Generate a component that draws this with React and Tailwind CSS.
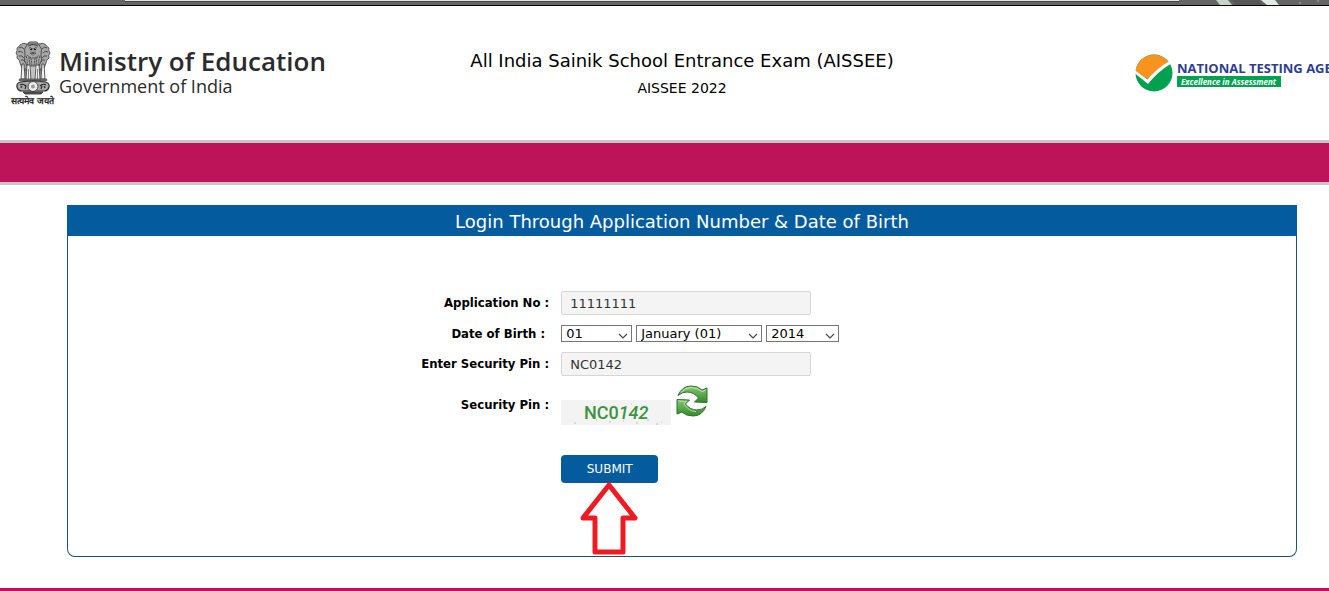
import React from "react";

const days = ["01", "02", "03", "04", "05", "06", "07", "08", "09", "10"];
const months = ["January (01)", "February (02)", "March (03)", "April (04)"];
const years = ["2014", "2013", "2012", "2011", "2010"];

const Emblem = () => (
	<svg viewBox="0 0 36 54" className="w-9 h-[54px]" aria-hidden="true">
		<g fill="#a8a8a8" stroke="#3a3a3a" strokeWidth="0.8">
			{/* side lions */}
			<path d="M12 3 Q8 1 5 4 Q4 6 2 7 Q3 9 1 12 Q3 14 2 17 Q5 19 5 22 Q6 26 9 29 L14 30 L14 5Z" />
			<path d="M24 3 Q28 1 31 4 Q32 6 34 7 Q33 9 35 12 Q33 14 34 17 Q31 19 31 22 Q30 26 27 29 L22 30 L22 5Z" />
			{/* front lion */}
			<path d="M12 4 Q13 0 18 1 Q23 0 24 4 Q28 8 26 13 Q28 20 24 25 L12 25 Q8 20 10 13 Q8 8 12 4Z" />
		</g>
		<g fill="none" stroke="#333" strokeWidth="0.8">
			<path d="M13 5 Q18 2 23 5 M13 3 H23 M14 7 Q16 6 17 8 M22 7 Q20 6 19 8 M18 7 V10 M15 11 Q18 9 21 11 M15 12 Q18 16 21 12" />
			<path d="M4 7 Q7 5 9 8 M3 11 Q6 9 8 12 M4 15 Q7 14 9 17 M6 19 Q9 18 10 21 M32 7 Q29 5 27 8 M33 11 Q30 9 28 12 M32 15 Q29 14 27 17 M30 19 Q27 18 26 21" />
			<path d="M11 15 Q13 20 12 24 M14 16 L15 24 M16 17 L17 25 M20 17 L19 25 M22 16 L21 24 M25 15 Q23 20 24 24 M12 14 Q18 20 24 14" strokeDasharray="2 0.8" />
		</g>
		<path d="M15 9 Q18 8 21 9 L20 13 Q18 15 16 13Z" fill="#999" />
		<path d="M15 8.500H17M19 8.500H21M16.500 12H19.500" stroke="#111" strokeWidth="1.200" />
		{/* legs */}
		<g stroke="#333" strokeWidth="0.8" fill="#f0f0f0">
			<path d="M7 23 L9 23 L10 38 L6 38Z M12 24 L15 24 L16 39 L11 39Z M21 24 L24 24 L25 39 L20 39Z M27 23 L29 23 L30 38 L26 38Z" />
		</g>
		<path d="M10.500 27V38M17 25V39M19 25V39M25.500 27V38M13.500 28V38M22.500 28V38" stroke="#666" strokeWidth="0.800" />
		{/* abacus */}
		<rect x="4" y="38" width="28" height="2" rx="1" fill="#777" stroke="#333" strokeWidth="0.6" />
		<path d="M6 41 Q18 39 30 41 Q35 42 34 46 Q33 50 29 50 H7 Q3 50 2 46 Q1 42 6 41Z" fill="#aaa" stroke="#2a2a2a" strokeWidth="1.200" />
		<circle cx="18" cy="45.500" r="5" fill="#eee" stroke="#444" strokeWidth="1" />
		<circle cx="18" cy="45.500" r="2" fill="#999" />
		<path d="M5 44 Q8 42 11 45 L10 48 M6 47 L7 45 M25 45 Q28 42 31 44 M26 48 L27 45 M30 47 L29 45" stroke="#222" fill="none" strokeWidth="1.100" />
		<path d="M8 51 H28 L26 53 H10Z" fill="#666" stroke="#222" strokeWidth="0.800" />
	</svg>
);

const NtaMark = () => (
	<svg viewBox="0 0 38 38" className="w-[38px] h-[38px] shrink-0" aria-hidden="true">
		<circle cx="19" cy="19" r="18.500" fill="#00a14f" />
		<path d="M0.500 18 A18.500 18.500 0 0 1 34 8.500 L13 25Z" fill="#f7931e" />
		<path d="M0 16.500 L12.500 25.500 Q22 14 34 7.500 L35.500 10 Q23 17.500 13 30 L0 19.500Z" fill="#fff" />
	</svg>
);

const RefreshIcon = () => (
	<svg viewBox="0 0 32 32" className="w-8 h-8" aria-hidden="true">
		<defs>
			<linearGradient id="leaf" x1="0" y1="0" x2="0" y2="1">
				<stop offset="0" stopColor="#8cc878" />
				<stop offset="1" stopColor="#2f8a2b" />
			</linearGradient>
		</defs>
		<g stroke="#2c7328" strokeWidth="1" strokeLinejoin="round" fill="url(#leaf)">
			<path d="M2 10.500 Q6 1 15 1 Q22 1 26 5 L31 3 V17.500 L18.500 17 L22.500 13 Q18 7 11 7 Q6 7 2 10.500Z" />
			<path d="M30 21.500 Q26 31 17 31 Q10 31 6 27 L1 29 V14.500 L13.500 15 L9.500 19 Q14 25 21 25 Q26 25 30 21.500Z" />
		</g>
		<path d="M5 7.500 Q9 2.500 15 2.500 Q21 2.500 26 6.500 L29.500 5" fill="none" stroke="#c5e6b9" strokeWidth="1" />
		<path d="M2.500 16 L10.500 16.500 L8 19 Q13 26.500 20 26.500" fill="none" stroke="#b5dba8" strokeWidth="1" />
	</svg>
);

const Row = ({ label, htmlFor, children, className = "" }) => (
	<div className={`flex items-center ${className}`}>
		<label htmlFor={htmlFor} className="w-2/5 pr-2.5 text-right text-[13px] leading-4 font-bold font-['DejaVu_Sans_Condensed','Noto_Sans',sans-serif]">
			{label}
		</label>
		<div className="flex pl-0.5">{children}</div>
	</div>
);

const Picker = ({ id, label, options, className }) => (
	<div className={`relative ${className}`}>
		<select
			id={id}
			aria-label={label}
			className="block w-full h-[17px] appearance-none border border-[#767676] bg-white pl-1 text-[13px] leading-4 text-black"
		>
			{options.map((option) => (
				<option key={option}>{option}</option>
			))}
		</select>
		<svg viewBox="0 0 10 6" className="absolute right-1 top-2 w-2.5 h-1.5 pointer-events-none" aria-hidden="true">
			<path d="M1 1 L5 5 L9 1" fill="none" stroke="#444" strokeWidth="1.100" />
		</svg>
	</div>
);

const inputStyle =
	"block w-[250px] h-6 rounded-xs border border-[#d6d6d6] bg-[#f4f4f4] px-2 text-[13px] leading-4 text-[#333]";

const App = () => {
	return (
		<div className="overflow-hidden bg-white text-black font-['DejaVu_Sans',sans-serif]">
			<div className="h-1.5 border-b border-black bg-[#646664]">
				<div className="flex h-full items-start">
					<span className="ml-[125px] h-px flex-1 border-b border-[#444] bg-[#dfe7e1] box-content" />
					<svg viewBox="0 0 150 5" className="w-[150px] h-[5px]" aria-hidden="true">
						<path d="M37 0H49L53 5H41Z" fill="#c5d3c8" />
						<path d="M82 0H96L100 5H88Z" fill="#e3e9e4" />
						<path d="M53 0H80L84 5H56Z" fill="#565856" />
						<path d="M120 3H122M138 1H140" stroke="#aaa" />
					</svg>
				</div>
			</div>

			{/* the page runs a little wider than the window */}
			<div className="-mr-[35px]">
				<header className="grid grid-cols-[1fr_auto_1fr] items-start pt-[35px] pb-8">
					<div className="flex items-start pl-2.5">
						<div className="flex w-[45px] flex-col items-center">
							<Emblem />
							<span lang="hi" className="whitespace-nowrap text-[9px] leading-[13px] font-semibold text-[#222]">
								सत्यमेव जयते
							</span>
						</div>
						<div className="pl-1 pt-1.5 font-['Open_Sans',sans-serif] text-[#2b2b2b]">
							<p className="text-[26px] leading-7 font-semibold whitespace-nowrap">Ministry of Education</p>
							<p className="text-[18px] leading-[22px]">Government of India</p>
						</div>
					</div>
					<div className="pt-2 text-center">
						<h1 className="text-[18px] leading-6">All India Sainik School Entrance Exam (AISSEE)</h1>
						<p className="mt-1 text-[14px] leading-[22px]">AISSEE 2022</p>
					</div>
					<div className="flex w-[229px] items-center justify-self-end pt-[13px]">
						<NtaMark />
						<div className="pl-1 whitespace-nowrap">
							<p className="text-[13px] leading-4 font-bold text-[#2e3d93] font-['Open_Sans',sans-serif]">NATIONAL TESTING AGENCY</p>
							<p className="w-[104px] bg-[#00a14f] pl-1 text-[8px] leading-[11px] font-bold italic text-white font-['Open_Sans',sans-serif]">
								Excellence in Assessment
							</p>
						</div>
					</div>
				</header>

				<div className="h-[45px] border-y-[3px] border-[#cbc5c5] bg-[#bd1358]" />

				<main className="mx-[67px] mt-5 mb-[31px] rounded-b-lg border border-[#1a5276] border-t-0">
					<h2 className="-mx-px bg-[#045c9f] pt-[5px] pb-0.5 text-center text-[18px] leading-6 text-white">
						Login Through Application Number &amp; Date of Birth
					</h2>
					<form className="pt-[55px] pb-[73px]" onSubmit={(e) => e.preventDefault()}>
						<Row label="Application No :" htmlFor="appno">
							<input id="appno" type="text" defaultValue="11111111" className={inputStyle} />
						</Row>
						<Row label={<>Date of Birth :&nbsp;</>} htmlFor="day" className="mt-2.5">
							<div className="flex gap-1">
								<Picker id="day" label="Day" options={days} className="w-[71px]" />
								<Picker id="month" label="Month" options={months} className="w-[126px]" />
								<Picker id="year" label="Year" options={years} className="w-[73px]" />
							</div>
						</Row>
						<Row label="Enter Security Pin :" htmlFor="pin" className="mt-2.5">
							<input id="pin" type="text" defaultValue="NC0142" className={inputStyle} />
						</Row>
						<div className="mt-[9px] flex items-center">
							<span className="w-2/5 pr-2.5 text-right text-[13px] leading-4 font-bold font-['DejaVu_Sans_Condensed','Noto_Sans',sans-serif]">
								Security Pin :
							</span>
							<div className="flex h-10 items-start gap-[5px] pl-0.5">
								<div className="relative w-[110px] h-[25px] self-end bg-[#f3f3f3] text-center text-[18px] leading-[26px] font-medium text-[#3c9440] font-['Roboto',sans-serif]">
									NC0<i>142</i>
									<svg viewBox="0 0 110 25" className="absolute inset-0" aria-hidden="true">
										<path d="M13 23h2M35 20h1M48 22h2M70 4h1M75 23h2M84 6h2M86 20h2M95 24h2M100 22h1M24 7h1M62 21h1" stroke="#a9cda9" />
									</svg>
								</div>
								<button type="button" aria-label="Refresh security pin" className="cursor-pointer">
									<RefreshIcon />
								</button>
							</div>
						</div>
						<div className="mt-[30px] flex">
							<span className="w-2/5" />
							<div className="relative pl-0.5">
								<button type="submit" className="block w-[97px] h-7 cursor-pointer rounded-sm bg-[#045c9f] text-[12px] leading-4 text-white">
									SUBMIT
								</button>
								<svg viewBox="0 0 60 74" className="absolute left-5 top-[27px] w-[60px] h-[74px] pointer-events-none" aria-hidden="true">
									<path d="M30 3 L56 36 H44 V70 H16 V36 H4 Z" fill="#fff" stroke="#ed1c24" strokeWidth="5" strokeLinejoin="round" />
								</svg>
							</div>
						</div>
					</form>
				</main>

				<footer className="h-[3px] bg-[#bd1358]" />
			</div>
		</div>
	);
};

export default App;
